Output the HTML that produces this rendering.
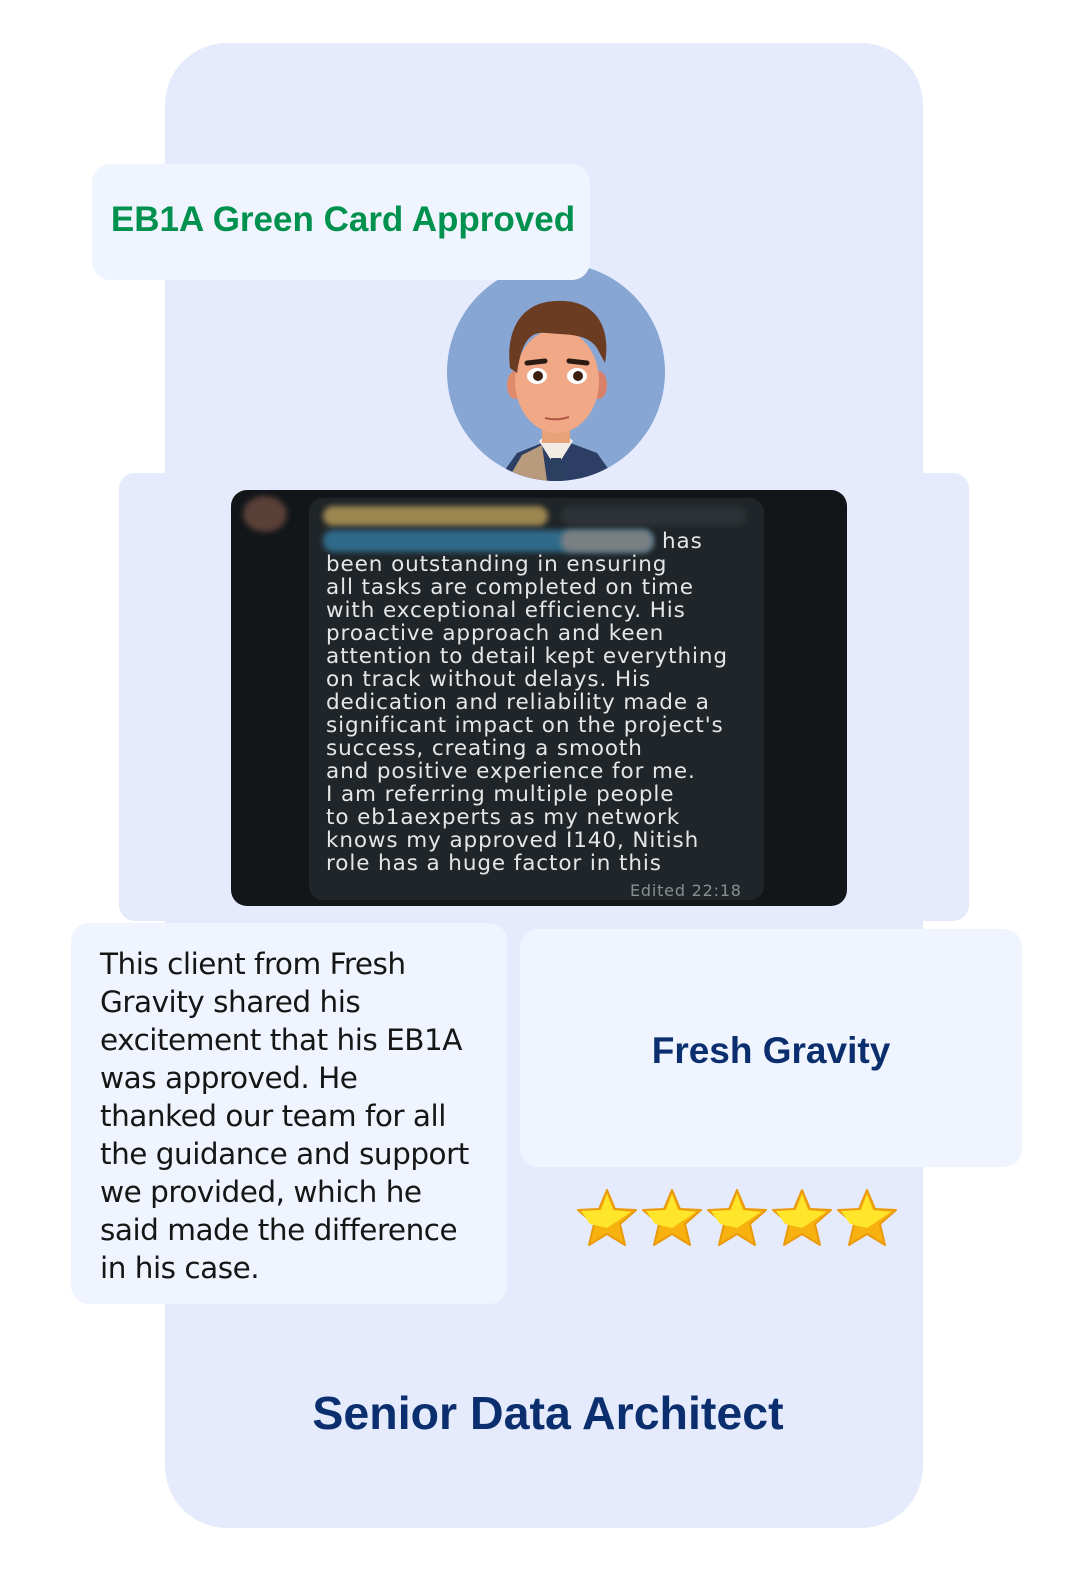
<!DOCTYPE html>
<html><head><meta charset="utf-8"><style>
*{margin:0;padding:0;box-sizing:border-box}
body{width:1080px;height:1571px;background:#fff;position:relative;overflow:hidden;font-family:"Liberation Sans",sans-serif}
.abs{position:absolute}
#main{left:165px;top:43px;width:758px;height:1485px;background:#e5ebfc;border-radius:62px}
#badge{left:92px;top:164px;width:498px;height:116px;background:#eff4fe;border-radius:18px;color:#00914e;font-weight:bold;font-size:35px;line-height:112px;text-align:center;padding-left:4px}
#mid{left:119px;top:473px;width:850px;height:448px;background:#e5ebfc;border-radius:16px}
#shot{left:231px;top:490px;width:616px;height:416px;background:#121619;border-radius:16px;overflow:hidden}
#bubble{left:78px;top:8px;width:455px;height:402px;background:#1f2528;border-radius:14px}
#chat{left:95px;top:40px;color:#e6e6e6;line-height:23px;white-space:pre;font-family:"DejaVu Sans","Liberation Sans",sans-serif;font-size:21.5px;letter-spacing:0.9px}
#left{left:71px;top:923px;width:436px;height:381px;background:#eff4fe;border-radius:18px;padding:22px 10px 0 29px;line-height:38px;color:#161616;font-family:"DejaVu Sans","Liberation Sans",sans-serif;font-size:29.5px;letter-spacing:-0.5px}
#right{left:520px;top:929px;width:502px;height:238px;background:#eff4fe;border-radius:18px;color:#0b2f6e;font-weight:bold;font-size:37px;text-align:center;line-height:244px}
#title{left:165px;top:1386px;width:766px;text-align:center;color:#0b2f6e;font-weight:bold;font-size:46.5px}
</style></head><body>
<div id="main" class="abs"></div>
<div id="mid" class="abs"></div>
<svg class="abs" style="left:447px;top:263px" width="218" height="218" viewBox="0 0 218 218">
<defs><clipPath id="c"><circle cx="109" cy="109" r="109"/></clipPath></defs>
<g clip-path="url(#c)">
<rect width="218" height="218" fill="#87a6d4"/>
<path d="M50 218 L70 190 L100 178 L118 178 L150 190 L170 218Z" fill="#2c3e63"/>
<path d="M60 218 L75 192 L95 182 L100 218Z" fill="#b89a7c"/>
<path d="M92 178 L109 205 L126 178 L118 170 L100 170Z" fill="#f2ede4"/>
<path d="M104 195 L114 195 L116 218 L102 218Z" fill="#2b3f5e"/>
<rect x="95" y="148" width="28" height="32" fill="#e8a27a"/>
<ellipse cx="68" cy="122" rx="8" ry="14" fill="#e08a6c"/>
<ellipse cx="152" cy="122" rx="8" ry="14" fill="#d9806a"/>
<ellipse cx="110" cy="118" rx="42" ry="52" fill="#f0a886"/>
<path d="M63 105 C58 60 80 38 110 38 C145 36 165 60 158 100 L150 85 C140 70 120 72 100 70 C85 68 75 75 70 110Z" fill="#6b3b22"/>
<path d="M80 100 L98 98 M122 98 L140 100" stroke="#2a1a12" stroke-width="5" stroke-linecap="round"/>
<ellipse cx="90" cy="113" rx="10" ry="8" fill="#fff"/><circle cx="91" cy="113" r="5" fill="#3b2012"/>
<ellipse cx="130" cy="113" rx="10" ry="8" fill="#fff"/><circle cx="131" cy="113" r="5" fill="#3b2012"/>
<path d="M98 155 Q110 158 122 154" stroke="#b05848" stroke-width="2" fill="none"/>
</g></svg>
<div id="badge" class="abs">EB1A Green Card Approved</div>
<div id="shot" class="abs">
<div class="abs" style="left:12px;top:6px;width:44px;height:36px;border-radius:50%;background:#5b4038;filter:blur(3px)"></div>
<div id="bubble" class="abs"></div>
<div class="abs" style="left:92px;top:16px;width:225px;height:20px;border-radius:10px;background:#9d8650;filter:blur(3px)"></div>
<div class="abs" style="left:330px;top:16px;width:185px;height:20px;border-radius:10px;background:#2d3336;filter:blur(3px)"></div>
<div class="abs" style="left:92px;top:40px;width:330px;height:22px;border-radius:10px;background:#2f6a8a;filter:blur(3px)"></div>
<div class="abs" style="left:330px;top:40px;width:92px;height:22px;border-radius:10px;background:#7a7f82;filter:blur(3px)"></div>
<div class="abs" style="left:431px;top:40px;color:#e6e6e6;font-family:'DejaVu Sans',sans-serif;font-size:21.5px;letter-spacing:0.9px;line-height:23px">has</div>
<div id="chat" class="abs">
been outstanding in ensuring
all tasks are completed on time
with exceptional efficiency. His
proactive approach and keen
attention to detail kept everything
on track without delays. His
dedication and reliability made a
significant impact on the project's
success, creating a smooth
and positive experience for me.
I am referring multiple people
to eb1aexperts as my network
knows my approved I140, Nitish
role has a huge factor in this</div>
<div class="abs" style="left:399px;top:391px;color:#8a8f92;font-size:16px;letter-spacing:0.8px;font-family:'DejaVu Sans',sans-serif">Edited 22:18</div>
</div>
<div id="left" class="abs">This client from Fresh<br>Gravity shared his<br>excitement that his EB1A<br>was approved. He<br>thanked our team for all<br>the guidance and support<br>we provided, which he<br>said made the difference<br>in his case.</div>
<div id="right" class="abs">Fresh Gravity</div>
<svg class="abs" style="left:576px;top:1188px" width="330" height="62" viewBox="0 0 330 62">
<defs><g id="s"><path d="M31 2 L39 21 L60 22 L44 36 L49 57 L31 46 L13 57 L18 36 L2 22 L23 21Z" fill="#f7b20f" stroke="#ea9a0a" stroke-width="2" stroke-linejoin="round"/><path d="M31 6 L37 22 L55 24 L31 40 L14 36 L5 23 L25 22Z" fill="#ffe62b"/></g></defs>
<use href="#s" x="0"/><use href="#s" x="65"/><use href="#s" x="130"/><use href="#s" x="195"/><use href="#s" x="260"/>
</svg>
<div id="title" class="abs">Senior Data Architect</div>
</body></html>
